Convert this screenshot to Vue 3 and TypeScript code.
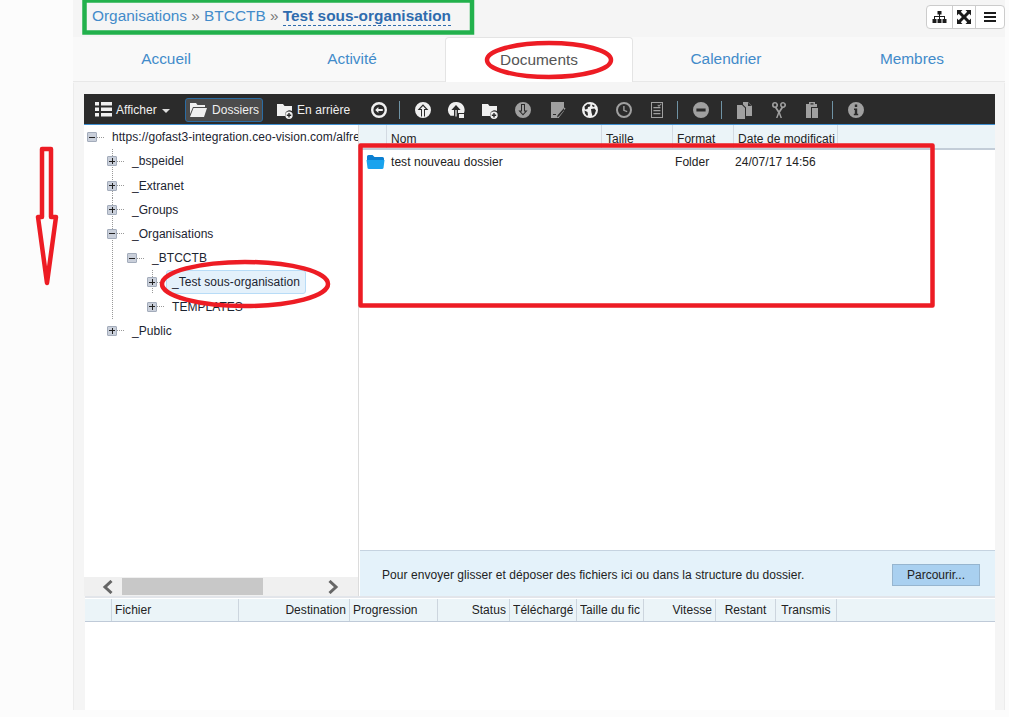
<script setup lang="ts">
interface TreeNode {
  label: string
  open?: boolean
  selected?: boolean
  guides: boolean[] // une case par niveau, true = trait vertical
  through?: boolean
}

interface ToolItem {
  d?: string
  dim?: boolean
}

const circle = 'M9 1a8 8 0 1 0 0 16a8 8 0 1 0 0-16z'

const tools: ToolItem[] = [
  { d: `${circle}M9 3.4a5.6 5.6 0 1 1 0 11.2a5.6 5.6 0 1 1 0-11.2zM5.2 9L8.4 6v2h4.4v2H8.4v2z` },
  {},
  { d: `${circle}M9 3.2L3.6 9H7v6.6h1V8H6.2L9 5l2.8 3H10v7.6h1V9h3.4z` },
  { d: `M9 1a8 8 0 0 0-5.5 13.8H7V9H4.4L9 4l4.6 5H11v3h6A8 8 0 0 0 9 1zM8.4 9h1.2v6.6H8.4zM12 13h5v4h-5z` },
  { d: `M1 3h6l1.5 2H16v5a4.5 4.5 0 0 0-6.8 5H1zM13 10.5a3.7 3.7 0 1 1 0 7.4a3.7 3.7 0 1 1 0-7.4zM12.3 12v1.5h-1.5v1.4h1.5v1.5h1.4v-1.5h1.5v-1.4h-1.5V12z` },
  { d: `${circle}M7 3h4v6.4h2.6L9 14.4L4.4 9.4H7zM8 4v6.4H6.6L9 13l2.4-2.6H10V4z`, dim: true },
  { d: 'M3 1h13v9l-5 6.5V17H3zM16.5 6.5l1 1l-6.5 7.8l-2 1.2l.6-2.2zM5 13h3v1H5z', dim: true },
  { d: `${circle}M3.5 5.5l3-2.5l3 .5l-.5 2l-2 .5l-.5 2l-2.5.5zM10 8l3.5-.5l1.5 2l-1.5 4l-2 1.5l-1-3.5zM11.5 3.5l2.5 1.5l-1.5 1l-1.5-1zM3.5 9.5l3 1.5l.5 3l-1 1l-2-2.5z` },
  { d: `${circle}M9 3a6 6 0 1 1 0 12a6 6 0 1 1 0-12zM8.2 5v4.8l3.8 1.4l.4-1.2l-2.8-1V5z`, dim: true },
  { d: 'M3 1h12v16H3zM4 2v14h10V2zM5.4 6h7v1.3h-7zM5.4 9h7v1.3h-7zM5.4 12h7v1.3h-7zM10 3.5l1 1l2-2l.6.6l-2.6 2.8l-1.6-1.6z', dim: true },
  {},
  { d: `${circle}M4.4 7.6h9.2v2.8H4.4z`, dim: true },
  {},
  { d: 'M1 4h5l3 3v11H1zM7 1h5l4 4v10h-6V6.5L7 3.5zM12 1.500V5h3.5z', dim: true },
  { d: 'M5 1a3 3 0 0 1 1.800 5.400L9 9.800l2.200-3.400A3 3 0 1 1 13 7l-3 4.400L12 17h-1.500L9 13l-1.500 4H6l2-5.600L5 7A3 3 0 0 1 5 1zM5 2.600a1.400 1.400 0 1 0 0 2.800a1.400 1.400 0 1 0 0-2.800zM13 2.600a1.400 1.400 0 1 0 0 2.800a1.400 1.400 0 1 0 0-2.800z', dim: true },
  { d: 'M6 1h6v2h2v3H8v11H3V3h3zM9 7h6v10H9zM7.500 2.200v1.300h3V2.200z', dim: true },
  {},
  { d: `${circle}M7.800 3.500h2.400v2.400H7.800zM7 7.500h3.200v5.200h1v1.500H6.800v-1.500h1V9H7z`, dim: true },
]

const nodes: TreeNode[] = [
  { label: 'https://gofast3-integration.ceo-vision.com/alfresco', open: true, guides: [] },
  { label: '_bspeidel', guides: [false], through: true },
  { label: '_Extranet', guides: [false], through: true },
  { label: '_Groups', guides: [false], through: true },
  { label: '_Organisations', open: true, guides: [false], through: true },
  { label: '_BTCCTB', open: true, guides: [false, true] },
  { label: '_Test sous-organisation', selected: true, guides: [false, true, false], through: true },
  { label: 'TEMPLATES', guides: [false, true, false] },
  { label: '_Public', guides: [false] },
]

const gridCols = [
  { label: '', w: 28 },
  { label: 'Nom', w: 215 },
  { label: 'Taille', w: 71 },
  { label: 'Format', w: 61 },
  { label: 'Date de modification', w: 104 },
]

const queueCols = [
  { label: '', w: 27, align: 'left' },
  { label: 'Fichier', w: 127, align: 'left' },
  { label: 'Destination', w: 111, align: 'right' },
  { label: 'Progression', w: 88, align: 'left' },
  { label: 'Status', w: 72, align: 'right' },
  { label: 'Téléchargé', w: 67, align: 'right' },
  { label: 'Taille du fichier', w: 67, align: 'left' },
  { label: 'Vitesse', w: 72, align: 'right' },
  { label: 'Restant', w: 60, align: 'center' },
  { label: 'Transmis', w: 61, align: 'center' },
]

const tabs = ['Accueil', 'Activité', 'Documents', 'Calendrier', 'Membres']
</script>

<template>
  <div class="page">
    <div class="shell">
      <header class="top">
        <div class="crumbs">
          <a>Organisations</a> <span class="sep">»</span> <a>BTCCTB</a> <span class="sep">»</span> <b>Test sous-organisation</b>
        </div>
        <div class="btn-group">
          <button class="gbtn w25">
            <svg width="15" height="14" viewBox="0 0 15 14"><path d="M5.500 1h4v3.500H8V6h5v3h1.500v4h-4V9H12V7H8v2h1.500v4h-4V9H7V7H3v2h1.500v4h-4V9H2V6h5V4.500H5.500z" /></svg>
          </button>
          <button class="gbtn w23">
            <svg width="14" height="14" viewBox="0 0 14 14"><path d="M0 0h5.500L3.800 1.700L7 4.900L10.200 1.700L8.500 0H14v5.500L12.300 3.800L9.100 7l3.200 3.200L14 8.500V14H8.500l1.700-1.700L7 9.100l-3.200 3.200L5.500 14H0V8.500l1.700 1.700L4.900 7L1.700 3.800L0 5.500z" /></svg>
          </button>
          <button class="gbtn w29">
            <svg width="14" height="12" viewBox="0 0 14 12"><path d="M1 1h12v2H1zM1 5h12v2H1zM1 9h12v2H1z" /></svg>
          </button>
        </div>
      </header>

      <nav class="tabs">
        <a v-for="t in tabs" :key="t" class="tab" :class="{ active: t === 'Documents' }">{{ t }}</a>
      </nav>

      <section class="panel">
        <div class="toolbar">
          <span class="tbtn afficher">
            <svg width="17" height="15" viewBox="0 0 17 15" class="ico"><path d="M0 0h4v3.500H0zM6 0h11v3.500H6zM0 5.500h4V9H0zM6 5.500h11V9H6zM0 11h4v3.500H0zM6 11h11v3.500H6z" /></svg>
            Afficher <i class="caret"></i>
          </span>
          <span class="tbtn dossiers">
            <svg width="18" height="15" viewBox="0 0 18 15" class="ico"><path d="M1 1h6l1.500 2H16v2H4L1 12zM4.500 6H18l-3 9H1z" /></svg>
            Dossiers
          </span>
          <span class="tbtn arriere">
            <svg width="18" height="18" viewBox="0 0 18 18" class="ico"><path d="M1 3h6l1.500 2H16v5a4.500 4.500 0 0 0-6.800 5H1zM13 10.500a3.700 3.700 0 1 1 0 7.400a3.700 3.700 0 1 1 0-7.400zM12.300 12v1.500h-1.500v1.400h1.500v1.500h1.400v-1.500h1.500v-1.400h-1.500V12z" fill-rule="evenodd" /></svg>
            En arrière
          </span>
          <template v-for="(tool, i) in tools" :key="i">
            <span v-if="tool.d" class="tool" :class="{ dim: tool.dim }">
              <svg width="18" height="18" viewBox="0 0 18 18"><path :d="tool.d" fill-rule="evenodd" /></svg>
            </span>
            <span v-else class="tool-sep"></span>
          </template>
        </div>

        <div class="explorer">
          <aside class="tree-pane">
            <div class="tree">
              <div v-for="n in nodes" :key="n.label" class="node">
                <span v-for="(g, i) in n.guides" :key="i" class="indent" :class="{ guide: g }"></span>
                <span class="exp-cell" :class="{ through: n.through }">
                  <span class="exp" :class="{ open: n.open }"></span>
                  <span class="dash"></span>
                </span>
                <span class="node-label" :class="{ selected: n.selected }">{{ n.label }}</span>
              </div>
            </div>
            <div class="hscroll">
              <svg class="arrow" width="12" height="14" viewBox="0 0 12 14"><path d="M9.500 1L3 7l6.500 6" /></svg>
              <span class="thumb"></span>
              <svg class="arrow right" width="12" height="14" viewBox="0 0 12 14"><path d="M2.500 1L9 7l-6.500 6" /></svg>
            </div>
          </aside>

          <div class="main-pane">
            <div class="grid-head">
              <span v-for="c in gridCols" :key="c.label" class="hcell" :style="{ width: c.w + 'px' }">{{ c.label }}</span>
            </div>
            <div class="grid-body">
              <div class="row">
                <svg class="folder" width="19" height="16" viewBox="0 0 19 16">
                  <path d="M1 2.500Q1 1 2.500 1h4L8.500 3h8Q18 3 18 4.500V6H1z" fill="#0b7fd1" />
                  <path d="M.5 6H18.500L17.500 14Q17.300 15 16 15H3Q1.700 15 1.500 14z" fill="#19a3ee" />
                </svg>
                <span class="c-name">test nouveau dossier</span>
                <span class="c-format">Folder</span>
                <span>24/07/17 14:56</span>
              </div>
            </div>
            <div class="dropzone">
              <span>Pour envoyer glisser et déposer des fichiers ici ou dans la structure du dossier.</span>
              <button class="browse">Parcourir...</button>
            </div>
          </div>
        </div>

        <div class="queue">
          <div class="queue-head">
            <span
              v-for="c in queueCols"
              :key="c.label"
              class="qcell"
              :style="{ width: c.w + 'px', textAlign: c.align }"
            >{{ c.label }}</span>
          </div>
        </div>
      </section>
    </div>

    <svg class="marks" width="1009" height="717" viewBox="0 0 1009 717">
      <rect x="84.500" y="0.500" width="387.500" height="32" class="green" />
      <ellipse cx="549" cy="60" rx="62" ry="17" class="red" />
      <ellipse cx="245" cy="284" rx="83" ry="22" class="red" />
      <rect x="360.500" y="145.500" width="572" height="160" class="red" />
      <polygon points="42,149 51,149 51,217 56,217 47,283 38,217 42,217" class="red" />
    </svg>
  </div>
</template>

<style scoped>
.page {
  position: relative; width: 1009px; height: 717px; overflow: hidden; box-sizing: border-box;
  padding-left: 73px; background: #fcfcfc; color: #222;
  font-family: "Liberation Sans", Arial, sans-serif; font-size: 12px; letter-spacing: 0.05px;
}
.shell { width: 932px; height: 710px; display: flex; flex-direction: column; background: #f5f5f5; }

.top { height: 37px; flex: none; display: flex; justify-content: space-between; align-items: flex-start; padding-left: 19px; }
.crumbs { font-size: 15.4px; line-height: 32px; color: #428bca; white-space: nowrap; letter-spacing: 0; }
.crumbs .sep { color: #777; }
.crumbs b { color: #2f6cae; border-bottom: 1px dashed #2f6cae; padding-bottom: 1px; }
.btn-group { display: flex; margin: 5px 0 0; border: 1px solid #ccc; border-radius: 4px; background: #fff; height: 22px; }
.gbtn { display: flex; align-items: center; justify-content: center; padding: 0; border: 0; border-left: 1px solid #ccc; background: transparent; }
.gbtn:first-child { border-left: 0; }
.gbtn svg { fill: #1c1c1c; }
.w25 { width: 25px; }
.w23 { width: 23px; }
.w29 { width: 29px; }

.tabs { height: 45px; flex: none; display: flex; background: #f9f9f9; }
.tab {
  flex: 1; display: flex; align-items: center; justify-content: center; box-sizing: border-box;
  font-size: 15.4px; color: #428bca; letter-spacing: 0; border-bottom: 1px solid #e8e8e8;
}
.tab.active { background: #fff; color: #555; border: 1px solid #e4e4e4; border-bottom: 0; border-radius: 4px 4px 0 0; }

.panel {
  flex: 1; min-height: 0; display: flex; flex-direction: column; box-sizing: border-box;
  padding: 11px 9px 0 10px; border: 1px solid #ececec; border-width: 0 1px 0 1px; margin-top: 1px;
}

.toolbar {
  height: 31px; flex: none; box-sizing: border-box; display: flex; align-items: center;
  background: #2b2b2b; border-bottom: 1px solid #3f8fd0; color: #f0f0f0; padding: 1px 0 0 11px;
}
.ico { fill: #f0f0f0; flex: none; }
.tbtn { display: flex; align-items: center; gap: 4px; white-space: nowrap; }
.afficher { width: 90px; }
.caret { width: 0; height: 0; margin: 3px 0 0 1px; border: 4px solid transparent; border-top-color: #ddd; border-bottom: 0; }
.dossiers {
  box-sizing: border-box; width: 78px; height: 24px; padding-left: 3px; gap: 5px;
  background: #4b4b4b; border: 1px solid #2b6ca3; border-radius: 3px;
}
.arriere { margin-left: 13px; width: 86px; gap: 3px; }
.tool { width: 33.500px; flex: none; display: flex; justify-content: center; fill: #f0f0f0; }
.tool.dim { fill: #a0a0a0; }
.tool-sep { width: 1px; height: 18px; flex: none; background: #6f93a5; margin: 0 6.5px 0 3px; }

.explorer { height: 471px; flex: none; display: flex; background: #fff; }
.tree-pane { width: 274px; flex: none; display: flex; flex-direction: column; border-right: 1px solid #dcdcdc; }
.tree { flex: 1; min-height: 0; overflow: hidden; padding-top: 0.1px; }
.node { display: flex; align-items: center; height: 24.200px; white-space: nowrap; color: #1c2430; }
.indent { width: 20px; height: 100%; flex: none; }
.indent.guide { background: repeating-linear-gradient(#999 0 1px, transparent 1px 2px) 8px 0 / 1px 100% no-repeat; }
.exp-cell { width: 28px; height: 100%; flex: none; display: flex; align-items: center; padding-left: 3px; box-sizing: border-box; }
.exp-cell.through { background: repeating-linear-gradient(#999 0 1px, transparent 1px 2px) 8px 0 / 1px 100% no-repeat; }
.exp {
  width: 10px; height: 10px; flex: none; box-sizing: border-box; border: 1px solid #a3acbb; border-radius: 1px;
  background: linear-gradient(#222, #222) center / 6px 1px no-repeat, linear-gradient(#222, #222) center / 1px 6px no-repeat, #c9cfda;
}
.exp.open { background: linear-gradient(#222, #222) center / 6px 1px no-repeat, #c9cfda; }
.dash { width: 7px; height: 1px; flex: none; background: repeating-linear-gradient(90deg, #999 0 1px, transparent 1px 2px); }
.node-label { flex: none; }
.node:first-child { width: 274px; overflow: hidden; }
.node-label.selected {
  margin-left: -6px; padding: 4px 5px; background: #e4f1fb; border: 1px solid #b8dcf7; border-radius: 3px;
}

.hscroll { height: 19px; flex: none; display: flex; align-items: center; background: #f0f0f0; }
.arrow { fill: none; stroke: #666; stroke-width: 3; margin-left: 18px; flex: none; }
.thumb { width: 141px; height: 17px; flex: none; background: #c8c8c8; margin-left: 8px; }
.arrow.right { margin-left: 64px; }

.main-pane { flex: 1; min-width: 0; display: flex; flex-direction: column; }
.grid-head { height: 25px; flex: none; box-sizing: border-box; display: flex; background: #ebf4f8; border-bottom: 2px solid #c3cdd8; }
.hcell {
  flex: none; box-sizing: border-box; padding: 7px 2px 0 4px; white-space: nowrap;
  overflow: clip; overflow-clip-margin: content-box;
  border-right: 1px solid #d3dae2; line-height: 15px;
}
.grid-body { flex: 1; min-height: 0; }
.row { display: flex; align-items: center; height: 24px; padding-left: 7px; white-space: nowrap; }
.folder { flex: none; margin-right: 6px; }
.c-name { width: 284px; flex: none; }
.c-format { width: 60px; flex: none; }
.dropzone {
  height: 46px; flex: none; box-sizing: border-box; display: flex; align-items: center; justify-content: space-between;
  background: #e4f2fa; border-top: 1px solid #c5d3e0; padding: 3px 15px 0 22px; margin-left: 1px;
}
.browse {
  width: 88px; height: 22px; padding: 0; font: inherit; color: #222;
  background: #a9d0f0; border: 1px solid #96b5cf;
}

.queue { flex: 1; min-height: 0; margin-left: 1px; background: #fff; border-top: 2px solid #e2e5ea; padding-top: 1px; }
.queue-head { height: 23px; box-sizing: border-box; display: flex; background: #ebf4f8; border-bottom: 1px solid #bfcad8; }
.qcell {
  flex: none; box-sizing: border-box; padding: 0 3px; line-height: 23px; white-space: nowrap;
  overflow: clip; overflow-clip-margin: content-box;
  border-right: 1px solid #ccd5de;
}

.marks { position: absolute; inset: 0; pointer-events: none; }
.marks .green { fill: none; stroke: #22b14c; stroke-width: 4.500; }
.marks .red { fill: none; stroke: #ed1c24; stroke-width: 4.500; stroke-linejoin: round; }
</style>
